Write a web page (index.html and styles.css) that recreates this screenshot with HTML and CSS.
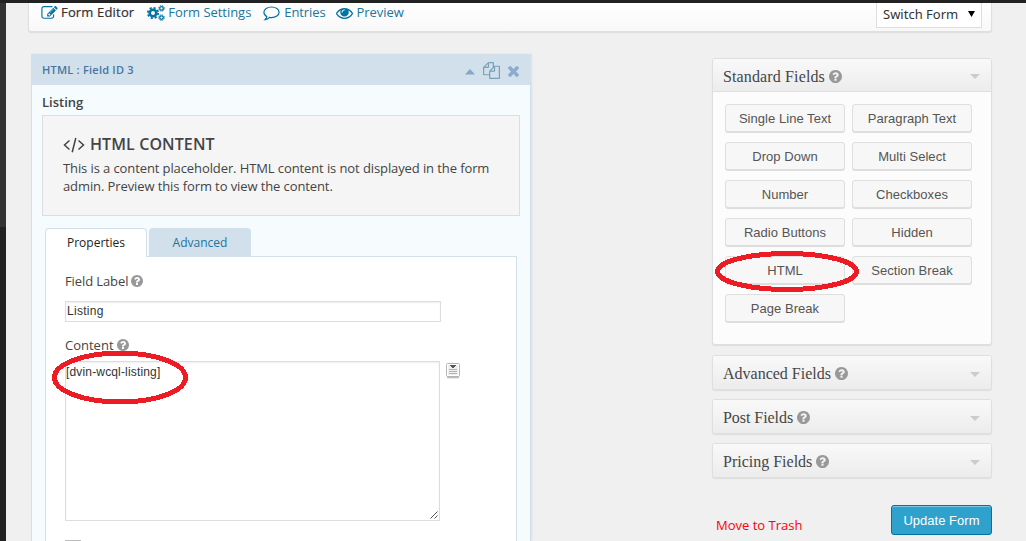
FILE: index.html
```html
<!DOCTYPE html>
<html lang="en">
<head>
<meta charset="utf-8">
<title>Form Editor</title>
<link rel="stylesheet" href="styles.css">
</head>
<body>
<svg class="defs" width="0" height="0">
  <symbol id="help" viewBox="128 128 1536 1536"><path d="M1024 1376v-192q0-14-9-23t-23-9h-192q-14 0-23 9t-9 23v192q0 14 9 23t23 9h192q14 0 23-9t9-23zm256-672q0-88-55.5-163t-138.5-116-170-41q-243 0-371 213-15 24 8 42l132 100q7 6 19 6 16 0 25-12 53-68 86-92 34-24 86-24 48 0 85.5 26t37.5 59q0 38-20 61t-68 45q-63 28-115.5 86.5t-52.5 125.5v36q0 14 9 23t23 9h192q14 0 23-9t9-23q0-19 21.5-49.5t54.5-49.5q32-18 49-28.5t46-35 44.5-48 28-60.5 12.5-81zm384 192q0 209-103 385.5t-279.5 279.5-385.5 103-385.5-103-279.5-279.5-103-385.5 103-385.5 279.5-279.5 385.5-103 385.5 103 279.5 279.5 103 385.5z"/></symbol>
</svg>
<div class="adminbar"></div>
<div class="shell">
  <div class="rail"><div class="rail-top"></div></div>
  <div class="content">
    <nav class="toolbar">
      <a class="tool active"><svg class="i-edit" viewBox="0 128 1792 1536"><path d="M888 1184l116-116-152-152-116 116v56h96v96h56zm440-720q-16-16-33 1l-350 350q-17 17-1 33t33-1l350-350q17-17 1-33zm80 594v190q0 119-84.5 203.5t-203.5 84.5h-832q-119 0-203.5-84.5t-84.5-203.5v-832q0-119 84.5-203.5t203.5-84.5h832q63 0 117 25 15 7 18 23 3 17-9 29l-49 49q-14 14-32 8-23-6-45-6h-832q-66 0-113 47t-47 113v832q0 66 47 113t113 47h832q66 0 113-47t47-113v-126q0-13 9-22l64-64q15-15 35-7t20 29zm-96-738l288 288-672 672h-288v-288zm444 132l-92 92-288-288 92-92q28-28 68-28t68 28l152 152q28 28 28 68t-28 68z"/></svg><span class="t-editor">Form Editor</span></a>
      <a class="tool"><svg class="i-cogs" viewBox="0 0 18 16"><g fill="none" stroke="#0074a2"><circle cx="6" cy="8" r="3.3" stroke-width="2.6"/><circle cx="6" cy="8" r="5.2" stroke-width="1.8" stroke-dasharray="2.1 1.984"/><circle cx="14.5" cy="3.4" r="1.8" stroke-width="1.3"/><circle cx="14.5" cy="3.4" r="2.8" stroke-width="1" stroke-dasharray="1.2 1"/><circle cx="14.5" cy="12.6" r="1.8" stroke-width="1.3"/><circle cx="14.5" cy="12.6" r="2.8" stroke-width="1" stroke-dasharray="1.2 1"/></g></svg><span class="t-settings">Form Settings</span></a>
      <a class="tool"><svg class="i-comment" viewBox="0 0 17 15"><path d="M8.5 1C4.300 1 .9 3.200 .9 6.300c0 1.900 1.200 3.400 3 4.400-.3 1.300-1 2.200-1.800 3 2-.3 3.300-1.100 4.500-2.300.6.100 1.200.2 1.900.2 4.200 0 7.600-2.200 7.600-5.300S12.700 1 8.500 1z" fill="none" stroke="#0074a2" stroke-width="1.2"/></svg><span class="t-entries">Entries</span></a>
      <a class="tool"><svg class="i-eye" viewBox="0 384 1792 1152"><path d="M1664 960q-152-236-381-353 61 104 61 225 0 185-131.500 316.500t-316.500 131.500-316.500-131.500-131.500-316.500q0-121 61-225-229 117-381 353 133 205 333.500 326.500t434.500 121.500 434.500-121.500 333.500-326.500zm-720-384q0-20-14-34t-34-14q-125 0-214.500 89.500t-89.500 214.500q0 20 14 34t34 14 34-14 14-34q0-86 61-147t147-61q20 0 34-14t14-34zm848 384q0 34-20 69-140 230-376.500 368.500t-499.500 138.500-499.500-139-376.500-368q-20-35-20-69t20-69q140-229 376.500-368t499.500-139 499.500 139 376.500 368q20 35 20 69z"/></svg><span class="t-preview">Preview</span></a>
      <div class="switch"><span>Switch Form</span><svg width="7" height="6" viewBox="0 0 7 6"><path d="M0 0h7L3.500 6z"/></svg></div>
    </nav>
    <div class="columns">
      <section class="editor">
        <header class="editor-head">
          <span class="field-id">HTML : Field ID 3</span>
          <svg class="i-up" width="10" height="6" viewBox="0 0 10 6"><path d="M5 0l5 5.500H0z"/></svg>
          <svg class="i-copy" viewBox="0 0 1792 1792"><path d="M1696 384q40 0 68 28t28 68v1216q0 40-28 68t-68 28h-960q-40 0-68-28t-28-68v-288h-544q-40 0-68-28t-28-68v-672q0-40 20-88t48-76l408-408q28-28 76-48t88-20h416q40 0 68 28t28 68v328q68-40 128-40h416zm-544 213l-299 299h299v-299zm-640-384l-299 299h299v-299zm196 647l316-316v-416h-384v416q0 40-28 68t-68 28h-416v640h512v-256q0-40 20-88t48-76zm956 804v-1152h-384v416q0 40-28 68t-68 28h-416v640h896z"/></svg>
          <svg class="i-close" viewBox="302 366 1188 1188"><path d="M1490 1322q0 40-28 68l-136 136q-28 28-68 28t-68-28l-294-294-294 294q-28 28-68 28t-68-28l-136-136q-28-28-28-68t28-68l294-294-294-294q-28-28-28-68t28-68l136-136q28-28 68-28t68 28l294 294 294-294q28-28 68-28t68 28l136 136q28 28 28 68t-28 68l-294 294 294 294q28 28 28 68z"/></svg>
        </header>
        <div class="editor-body">
          <div class="field-name">Listing</div>
          <div class="placeholder">
            <h3><svg class="i-code" width="22" height="16" viewBox="0 0 22 16"><path d="M6.500 3.500L1.500 8l5 4.500M15.500 3.500l5 4.500-5 4.500M12.800 1L9.200 15.200" fill="none" stroke="#444" stroke-width="1.500"/></svg><span>HTML CONTENT</span></h3>
            <p><span class="line-a">This is a content placeholder. HTML content is not displayed in the form</span><br><span class="line-b">admin. Preview this form to view the content.</span></p>
          </div>
          <div class="tabs"><div class="tab current"><span>Properties</span></div><div class="tab"><span>Advanced</span></div></div>
          <div class="panel">
            <div class="label first"><span>Field Label</span><svg><use href="#help"/></svg></div>
            <div class="input">Listing</div>
            <div class="label second"><span>Content</span><svg><use href="#help"/></svg></div>
            <div class="area-row">
              <div class="area"><span>[dvin-wcql-listing]</span><svg class="grip" width="8" height="8" viewBox="0 0 8 8"><path d="M.5 7.500l7-7M4.500 7.500l3-3" stroke="#555" fill="none"/></svg></div>
              <svg class="merge" width="14" height="16" viewBox="0 0 14 16"><path d="M1 14.500h12" stroke="#bbb" stroke-width="1.500"/><rect x=".5" y=".5" width="13" height="13" rx="1" fill="#fff" stroke="#b5b5b5"/><path d="M2 2h10v10H2z" fill="#eee"/><path d="M4 2h6v1H9v1H8v1H6V4H5V3H4z" fill="#555"/><path d="M3 6.500h8M3 8.500h8M3 10.500h8" stroke="#b5b5b5"/></svg>
            </div>
            <div class="checkbox"></div>
          </div>
        </div>
      </section>
      <aside class="side">
        <div class="box open">
          <div class="box-head"><span class="h1">Standard Fields</span><svg class="help"><use href="#help"/></svg><i></i></div>
          <div class="buttons">
            <div class="btn">Single Line Text</div><div class="btn">Paragraph Text</div>
            <div class="btn">Drop Down</div><div class="btn">Multi Select</div>
            <div class="btn">Number</div><div class="btn">Checkboxes</div>
            <div class="btn">Radio Buttons</div><div class="btn">Hidden</div>
            <div class="btn">HTML</div><div class="btn">Section Break</div>
            <div class="btn">Page Break</div>
          </div>
        </div>
        <div class="box"><div class="box-head"><span class="h2">Advanced Fields</span><svg class="help"><use href="#help"/></svg><i></i></div></div>
        <div class="box"><div class="box-head"><span class="h3">Post Fields</span><svg class="help"><use href="#help"/></svg><i></i></div></div>
        <div class="box"><div class="box-head"><span class="h4">Pricing Fields</span><svg class="help"><use href="#help"/></svg><i></i></div></div>
        <div class="actions"><a class="trash">Move to Trash</a><div class="update">Update Form</div></div>
      </aside>
    </div>
  </div>
</div>
<svg class="marks" width="1026" height="541" viewBox="0 0 1026 541" shape-rendering="crispEdges"><g fill="none" stroke="#ed1c24" stroke-width="5"><ellipse cx="120" cy="377.500" rx="65.500" ry="24.500"/><ellipse cx="787" cy="271.500" rx="69.500" ry="18"/></g></svg>
</body>
</html>
```
FILE: styles.css
```css
* { box-sizing: border-box; }
body { margin: 0; width: 1026px; height: 541px; overflow: hidden; display: flex; flex-direction: column; background: #f0f0f0; color: #444; font: 13px/18px "Open Sans", sans-serif; }
svg { flex: none; fill: currentColor; }
span { white-space: nowrap; }
.defs { position: absolute; }
.adminbar { flex: none; height: 3px; background: #222; }
.shell { flex: 1; min-height: 0; display: flex; }
.rail { width: 6px; background: #222; }
.rail-top { height: 224px; background: #333; }
.content { flex: 1; padding: 0 34px 0 22px; display: flex; flex-direction: column; min-height: 0; }

.toolbar { flex: none; height: 29px; padding-left: 12px; padding-right: 9px; display: flex; align-items: flex-start; border: 1px solid #dfdfdf; border-top: 0; border-radius: 0 0 3px 3px; background: linear-gradient(#fff, #f8f8f8); box-shadow: 0 1px 1px #ddd; }
.tool { display: flex; height: 20px; align-items: center; color: #21759b; }
.tool span { margin-top: -2px; }
.tool svg { color: #0074a2; margin-right: 3px; }
.i-edit { width: 17px; height: 14px; }
.i-cogs { width: 18px; height: 16px; margin-left: 13px; }
.tool .i-comment { width: 17px; height: 15px; margin-left: 12px; margin-right: 4px; }
.tool .i-eye { width: 17px; height: 11px; margin-left: 10px; margin-right: 4px; }
.tool.active { color: #333; }
.t-editor { letter-spacing: .17px; -webkit-text-stroke: .2px #333; }
.t-settings { letter-spacing: -.04px; }
.t-entries { letter-spacing: -.1px; }
.t-preview { letter-spacing: -.05px; }
.switch { margin-left: auto; width: 106px; height: 25px; padding: 0 6px; display: flex; align-items: center; justify-content: space-between; background: #fff; border: 1px solid #ddd; border-top: 0; color: #333; font: 13px "Noto Sans", sans-serif; }
.switch span { letter-spacing: 0; margin-top: -2px; }
.switch svg { color: #000; margin-top: -3px; }

.columns { flex: 1; min-height: 0; display: flex; justify-content: space-between; padding: 22px 0 0 3px; }
.editor { width: 500px; display: flex; flex-direction: column; border: 1px solid #d2e0eb; border-bottom: 0; background: #f6fbfe; box-shadow: 1px 0 2px #d8e0e8; overflow: hidden; }
.editor-head { flex: none; height: 30px; padding: 0 10px; display: flex; align-items: center; background: #d2e0eb; color: #8caccc; }
.field-id { color: #49759e; font-size: 11px; font-weight: 600; letter-spacing: .23px; margin-right: auto; }
.i-up { margin: 4px 8px 0 0; color: #85a8c8; }
.i-copy { width: 17px; height: 17px; margin: 0 8px 0 0; color: #7ba1b8; }
.i-close { width: 11px; height: 11px; margin: 3px 1px 0 0; }
.editor-body { flex: 1; min-height: 0; display: flex; flex-direction: column; padding: 7px 10px 0; }
.field-name { font-weight: 600; line-height: 20px; }
.placeholder { flex: none; margin-top: 3px; height: 101px; border: 1px solid #ddd; background: #f5f5f5; padding: 18px 20px; }
.placeholder h3 { margin: 0; height: 21px; display: flex; align-items: center; font-size: 16px; font-weight: 600; line-height: 21px; letter-spacing: .1px; }
.i-code { margin-right: 5px; }
.placeholder p { margin: 4px 0 0; letter-spacing: -.1px; }
.tabs { flex: none; margin: 12px 0 0 3px; display: flex; gap: 2px; height: 28px; }
.tab { width: 102px; height: 28px; font-size: 12px; line-height: 29px; text-align: center; background: #d2e0eb; color: #21759b; border-radius: 4px 4px 0 0; }
.tab.current { height: 29px; background: #fff; color: #222; border: 1px solid #d2e0eb; border-bottom: 0; z-index: 1; line-height: 28px; }
.panel { flex: 1; min-height: 0; overflow: hidden; width: 472px; margin-left: 3px; padding: 15px 0 0 19px; border: 1px solid #d2e0eb; border-bottom: 0; background: #fff; }
.label { display: flex; align-items: center; gap: 3px; }
.label.first { letter-spacing: -.1px; }
.label svg { width: 12px; height: 12px; color: #999; }
.input { margin-top: 11px; width: 376px; height: 21px; border: 1px solid #ddd; box-shadow: inset 0 1px 2px #eee; padding-left: 1px; color: #333; font: 12px/19px "Liberation Sans", sans-serif; letter-spacing: .3px; }
.label.second { margin-top: 14px; }
.area-row { display: flex; gap: 6px; margin-top: 7px; }
.area { width: 375px; height: 160px; display: flex; justify-content: space-between; border: 1px solid #ddd; box-shadow: inset 0 1px 2px #eee; color: #333; font: 12px/20px "Liberation Sans", sans-serif; letter-spacing: .16px; }
.grip { align-self: flex-end; margin: 0 1px 1px 0; }
.merge { margin-top: 2px; }
.checkbox { margin-top: 19px; width: 16px; height: 1px; background: #bbb; }

.side { width: 280px; padding-top: 4px; }
.box { height: 35px; margin-bottom: 9px; border: 1px solid #dfdfdf; border-radius: 3px; background: #fcfcfc; box-shadow: 0 1px 1px #ddd; overflow: hidden; }
.box.open { height: 287px; margin-bottom: 10px; }
.box-head { height: 33px; padding: 3px 11px 0 10px; display: flex; align-items: center; background: linear-gradient(#f9f9f9, #ececec); color: #464646; font: 16px "Liberation Serif", serif; }
.h1 { letter-spacing: .13px; }
.h3 { letter-spacing: -.05px; }
.open .box-head { border-bottom: 1px solid #dfdfdf; }
.box-head .help { width: 13px; height: 13px; color: #999; margin: -1px 0 0 4px; }
.box-head i { margin-left: auto; border: 5px solid transparent; border-top-color: #ccc; border-bottom: 0; }
.buttons { display: grid; grid-template-columns: 120px 120px; gap: 10px 7px; padding: 12px; }
.btn { height: 28px; border: 1px solid #dfdfdf; border-radius: 3px; background: #f7f7f7; box-shadow: 0 1px 0 #ddd; text-align: center; color: #555; font: 13px/27px "Liberation Sans", sans-serif; letter-spacing: .04px; }
.actions { display: flex; justify-content: space-between; padding: 18px 0 0 4px; }
.trash { color: red; padding-top: 11px; }
.update { width: 101px; height: 30px; border: 1px solid #0074a2; border-radius: 3px; background: #2ea2cc; box-shadow: inset 0 1px 0 #78c8e6; color: #fff; text-align: center; font: 13px/29px "Liberation Sans", sans-serif; letter-spacing: .02px; }
.marks { position: absolute; left: 0; top: 0; pointer-events: none; }
```
